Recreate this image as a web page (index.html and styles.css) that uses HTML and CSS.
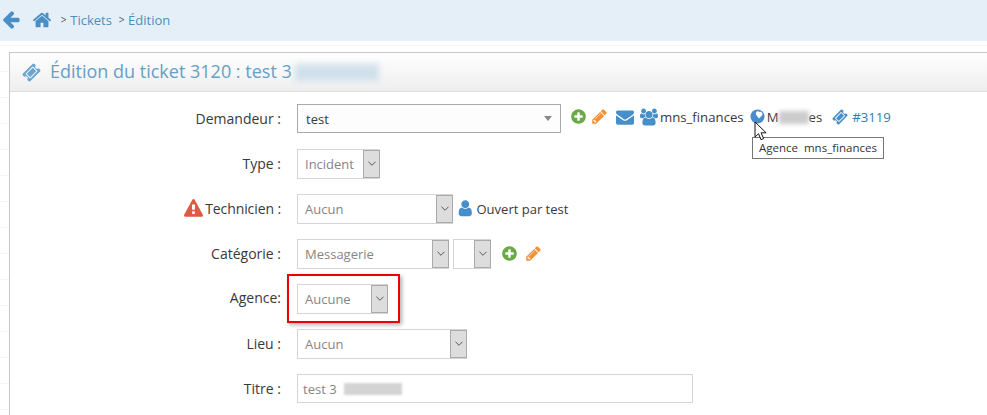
FILE: index.html
```html
<!DOCTYPE html>
<html lang="fr">
<head>
<meta charset="utf-8">
<title>Édition du ticket</title>
<link rel="stylesheet" href="styles.css">
</head>
<body>
<nav class="crumbs">
  <svg class="ico back" viewBox="0 0 1792 1792"><path d="M1664 832v128q0 53-32.500 90.500t-84.500 37.500h-704l293 294q38 36 38 90t-38 90l-75 76q-37 37-90 37-52 0-91-37l-651-652q-37-37-37-90 0-52 37-91l651-650q38-38 91-38 52 0 90 38l75 74q38 38 38 91t-38 91l-293 293h704q52 0 84.500 37.500t32.500 90.500z"/></svg>
  <svg class="ico home" viewBox="0 0 1792 1792"><path d="M1472 992v480q0 26-19 45t-45 19h-384v-384h-256v384h-384q-26 0-45-19t-19-45v-480q0-1 .5-3t.5-3l575-474 575 474q1 2 1 6zm223-69l-62 74q-8 9-21 11h-3q-13 0-21-7l-692-577-692 577q-12 8-24 7-13-2-21-11l-62-74q-8-10-7-23.500t11-21.500l719-599q32-26 76-26t76 26l244 204v-195q0-14 9-23t23-9h192q14 0 23 9t9 23v408l219 182q10 8 11 21.500t-7 23.500z"/></svg>
  <span class="sep">&gt;</span><a class="crumb">Tickets</a>
  <span class="sep">&gt;</span><a class="crumb">Édition</a>
</nav>
<main class="page">
  <section class="panel">
    <header class="panel-head">
      <svg class="ico ticket-big" viewBox="0 0 1792 1792"><path d="M1024 452l316 316-572 572-316-316zm-211 979l618-618q19-19 19-45t-19-45l-362-362q-18-18-45-18t-45 18l-618 618q-19 19-19 45t19 45l362 362q18 18 45 18t45-18zm889-637l-907 908q-37 37-90.500 37t-90.500-37l-126-126q56-56 56-136t-56-136-136-56-136 56l-125-126q-37-37-37-90.500t37-90.500l907-906q37-37 90.500-37t90.500 37l125 125q-56 56-56 136t56 136 136 56 136-56l126 125q37 37 37 90.500t-37 90.500z"/></svg>
      <h1 class="title">Édition du ticket 3120 : test 3</h1>
      <span class="blur-title"></span>
    </header>
    <form class="form">
      <div class="label">Demandeur :</div>
      <div class="field">
        <div class="combo"><span>test</span><i class="caret"></i></div>
        <div class="meta">
          <svg class="ico add first" viewBox="0 0 1792 1792"><path d="M1344 960v-128q0-26-19-45t-45-19h-256v-256q0-26-19-45t-45-19h-128q-26 0-45 19t-19 45v256h-256q-26 0-45 19t-19 45v128q0 26 19 45t45 19h256v256q0 26 19 45t45 19h128q26 0 45-19t19-45v-256h256q26 0 45-19t19-45zm320-64q0 209-103 385.500t-279.500 279.500-385.500 103-385.500-103-279.500-279.500-103-385.500 103-385.500 279.500-279.500 385.500-103 385.500 103 279.500 279.500 103 385.500z"/></svg>
          <svg class="ico edit" viewBox="0 0 1792 1792"><path d="M491 1536l91-91-235-235-91 91v107h128v128h107zm523-928q0-22-22-22-10 0-17 7l-542 542q-7 7-7 17 0 22 22 22 10 0 17-7l542-542q7-7 7-17zm-54-192l416 416-832 832h-416v-416zm683 96q0 53-37 90l-166 166-416-416 166-165q36-38 90-38 53 0 91 38l235 234q37 39 37 91z"/></svg>
          <svg class="ico mail" viewBox="0 0 1792 1792"><path d="M1792 710v794q0 66-47 113t-113 47h-1472q-66 0-113-47t-47-113v-794q44 49 101 87 362 246 497 345 57 42 92.500 65.500t94.500 48 110 24.500h2q51 0 110-24.500t94.500-48 92.500-65.500q170-123 498-345 57-39 100-87zm0-294q0 79-49 151t-122 123q-376 261-468 325-10 7-42.500 30.500t-54 38-52 32.500-57.500 27-50 9h-2q-23 0-50-9t-57.500-27-52-32.500-54-38-42.500-30.500q-91-64-262-182.500t-205-142.500q-62-42-117-115.500t-55-136.500q0-78 41.500-130t118.500-52h1472q65 0 112.500 47t47.500 113z"/></svg>
          <svg class="ico users" viewBox="0 0 1920 1792"><path d="M593 896q-162 5-265 128h-134q-82 0-138-40.500t-56-118.500q0-353 124-353 6 0 43.500 21t97.500 42.500 119 21.500q67 0 133-23-5 37-5 66 0 139 81 256zm1071 637q0 120-73 189.500t-194 69.500h-874q-121 0-194-69.500t-73-189.500q0-53 3.500-103.500t14-109 26.500-108.500 43-97.500 62-81 85.500-53.500 111.500-20q10 0 43 21.500t73 48 107 48 135 21.500 135-21.500 107-48 73-48 43-21.500q61 0 111.500 20t85.500 53.500 62 81 43 97.500 26.500 108.500 14 109 3.500 103.500zm-1024-1277q0 106-75 181t-181 75-181-75-75-181 75-181 181-75 181 75 75 181zm704 384q0 159-112.500 271.500t-271.500 112.500-271.500-112.500-112.500-271.500 112.500-271.500 271.500-112.500 271.500 112.500 112.500 271.500zm576 225q0 78-56 118.500t-138 40.500h-134q-103-123-265-128 81-117 81-256 0-29-5-66 66 23 133 23 59 0 119-21.500t97.500-42.500 43.500-21q124 0 124 353zm-128-609q0 106-75 181t-181 75-181-75-75-181 75-181 181-75 181 75 75 181z"/></svg>
          <span class="txt">mns_finances</span>
          <svg class="ico globe" viewBox="0 0 16 16"><circle cx="8" cy="8" r="7.500" fill="#4a8ccb"/><path fill="#fff" d="M7 3c1-.7 2.300-.6 3 .2.900-.5 2.300-.2 3 1 .6 1.200.1 2.500-.9 3.400L9.500 10 7.700 7.800C6.800 6.800 6 5.900 6.200 4.600c.1-.7.300-1.300.8-1.600z"/></svg>
          <span class="txt masked">M<span class="blur-inline"></span>es</span>
          <svg class="ico ticket-small" viewBox="0 0 1792 1792"><path d="M1024 452l316 316-572 572-316-316zm-211 979l618-618q19-19 19-45t-19-45l-362-362q-18-18-45-18t-45 18l-618 618q-19 19-19 45t19 45l362 362q18 18 45 18t45-18zm889-637l-907 908q-37 37-90.500 37t-90.500-37l-126-126q56-56 56-136t-56-136-136-56-136 56l-125-126q-37-37-37-90.500t37-90.500l907-906q37-37 90.500-37t90.500 37l125 125q-56 56-56 136t56 136 136 56 136-56l126 125q37 37 37 90.500t-37 90.500z"/></svg>
          <a class="ticket-link">#3119</a>
        </div>
      </div>

      <div class="label">Type :</div>
      <div class="field">
        <div class="select w-type"><span>Incident</span><b class="btn"><svg viewBox="0 0 9 5"><path d="M.5.500 4.500 4.500 8.500.500"/></svg></b></div>
      </div>

      <div class="label"><svg class="ico warn" viewBox="0 0 1792 1792"><path d="M1024 1375v-190q0-14-9.500-23.500t-22.500-9.500h-192q-13 0-22.500 9.500t-9.500 23.500v190q0 14 9.500 23.500t22.500 9.500h192q13 0 22.500-9.500t9.500-23.500zm-2-374l18-459q0-12-10-19-13-11-24-11h-220q-11 0-24 11-10 7-10 21l17 457q0 10 10 16.500t24 6.500h185q14 0 23.500-6.500t10.500-16.500zm-14-934l768 1408q35 63-2 126-17 29-46.500 46t-63.500 17h-1536q-34 0-63.500-17t-46.500-46q-37-63-2-126l768-1408q17-31 47-49t65-18 65 18 47 49z"/></svg><span class="tech">Technicien :</span></div>
      <div class="field">
        <div class="select w-tech"><span>Aucun</span><b class="btn"><svg viewBox="0 0 9 5"><path d="M.5.500 4.500 4.500 8.500.500"/></svg></b></div>
        <svg class="ico user" viewBox="0 0 1792 1792"><path d="M1536 1399q0 109-62.500 187t-150.500 78h-854q-88 0-150.500-78t-62.500-187q0-85 8.500-160.500t31.500-152 58.500-131 94-89 134.500-34.500q131 128 313 128t313-128q76 0 134.500 34.500t94 89 58.500 131 31.500 152 8.500 160.500zm-256-887q0 159-112.500 271.500t-271.500 112.500-271.500-112.500-112.500-271.500 112.500-271.500 271.500-112.500 271.500 112.500 112.500 271.500z"/></svg>
        <span class="txt">Ouvert par test</span>
      </div>

      <div class="label">Catégorie :</div>
      <div class="field">
        <div class="select w-cat"><span>Messagerie</span><b class="btn"><svg viewBox="0 0 9 5"><path d="M.5.500 4.500 4.500 8.500.500"/></svg></b></div>
        <div class="select w-sub"><b class="btn"><svg viewBox="0 0 9 5"><path d="M.5.500 4.500 4.500 8.500.500"/></svg></b></div>
        <svg class="ico add second" viewBox="0 0 1792 1792"><path d="M1344 960v-128q0-26-19-45t-45-19h-256v-256q0-26-19-45t-45-19h-128q-26 0-45 19t-19 45v256h-256q-26 0-45 19t-19 45v128q0 26 19 45t45 19h256v256q0 26 19 45t45 19h128q26 0 45-19t19-45v-256h256q26 0 45-19t19-45zm320-64q0 209-103 385.500t-279.500 279.500-385.500 103-385.500-103-279.500-279.500-103-385.500 103-385.500 279.500-279.500 385.500-103 385.500 103 279.500 279.500 103 385.500z"/></svg>
        <svg class="ico edit" viewBox="0 0 1792 1792"><path d="M491 1536l91-91-235-235-91 91v107h128v128h107zm523-928q0-22-22-22-10 0-17 7l-542 542q-7 7-7 17 0 22 22 22 10 0 17-7l542-542q7-7 7-17zm-54-192l416 416-832 832h-416v-416zm683 96q0 53-37 90l-166 166-416-416 166-165q36-38 90-38 53 0 91 38l235 234q37 39 37 91z"/></svg>
      </div>

      <div class="label label-agence">Agence:</div>
      <div class="field">
        <div class="select w-agence highlighted"><span>Aucune</span><b class="btn"><svg viewBox="0 0 9 5"><path d="M.5.500 4.500 4.500 8.500.500"/></svg></b></div>
      </div>

      <div class="label">Lieu :</div>
      <div class="field">
        <div class="select w-lieu"><span>Aucun</span><b class="btn"><svg viewBox="0 0 9 5"><path d="M.5.500 4.500 4.500 8.500.500"/></svg></b></div>
      </div>

      <div class="label">Titre :</div>
      <div class="field">
        <div class="input"><span>test 3</span><span class="blur-input"></span></div>
      </div>
    </form>
  </section>
</main>
<div class="tooltip">Agence&nbsp; mns_finances</div>
<svg class="cursor" viewBox="0 0 13 20"><path d="M1 1v15l3.500-3.300 2.500 6 2.600-1.100-2.500-5.800h5z" fill="#fff" stroke="#111" stroke-width="1"/></svg>
</body>
</html>
```

FILE: styles.css
```css
* { box-sizing: border-box; }
html, body { margin: 0; height: 415px; overflow: hidden; background: #fff; }
body { font-family: "Open Sans", sans-serif; font-size: 13px; color: #393939; }
svg.ico { fill: currentColor; display: block; flex: none; }

.crumbs { height: 41px; background: #e4eff7; display: flex; align-items: center; padding: 0 0 2px 1px; color: #4a8fc4; }
.back { width: 20px; height: 20px; color: #4a8ec6; margin-right: 11px; }
.home { width: 20px; height: 20px; color: #4a8ec6; margin-right: 7px; }
.sep { color: #666; font-family: "DejaVu Sans", sans-serif; font-size: 11px; margin-right: 2px; transform: scaleX(.7); }
.crumb { color: #4c8fbd; margin-right: 5px; }

.page { height: 374px; padding: 11px 0 0 9px; background: repeating-linear-gradient(to bottom, transparent 0, transparent 4px, #f1f5f9 4px, #f1f5f9 5px, transparent 5px, transparent 26px); }
.panel { background: #fff; border-left: 1px solid #c6c6c6; border-top: 1px solid #c6c6c6; height: 363px; }
.panel-head { height: 39px; border-bottom: 1px solid #ddd; background: linear-gradient(#fff, #eee); display: flex; align-items: center; padding-left: 12px; color: #669fc7; }
.ticket-big { width: 19px; height: 19px; margin-right: 9px; color: #6aa5d0; }
.title { margin: -2px 0 0; font-size: 18px; font-weight: 400; color: #669fc7; line-height: 1; }
.blur-title { width: 84px; height: 17px; margin-left: 3px; background: #d0e0eb; filter: blur(3px); }

.form { display: grid; grid-template-columns: 272px 1fr; grid-auto-rows: 45px; padding-top: 4px; }
.label { display: flex; justify-content: flex-end; align-items: center; font-size: 14px; padding-right: 1px; }
.label-agence { padding-bottom: 3px; }
.tech { letter-spacing: -.1px; }
.field { display: flex; align-items: center; padding-left: 15px; }

.combo { width: 264px; height: 29px; border: 1px solid #aaa; display: flex; align-items: center; justify-content: space-between; padding: 0 8px; background: #fdfdfd; }
.caret { width: 0; height: 0; border: 4.500px solid transparent; border-top: 5px solid #888; border-bottom: 0; }
.meta { display: flex; align-items: center; margin-bottom: 4px; font-size: 13.200px; }
.first { margin-left: 9px; }
.add { width: 17px; height: 17px; color: #69aa46; }
.edit { width: 17px; height: 17px; margin-left: 4px; color: #f78f33; }
.mail { width: 18px; height: 18px; color: #478fca; margin-left: 8px; }
.users { width: 18px; height: 18px; color: #478fca; margin-left: 6px; }
.txt { margin-left: 2px; color: #393939; }
.globe { width: 15px; height: 15px; margin-left: 6px; }
.masked { display: inline-flex; margin-left: 2px; }
.blur-inline { width: 30px; height: 13px; margin-top: 3px; background: #ccc; filter: blur(2px); }
.ticket-small { width: 16px; height: 16px; margin-left: 10px; color: #478fca; }
.ticket-link { margin-left: 4px; color: #337ab7; }

.select { height: 30px; border: 1px solid #d5d5d5; display: flex; align-items: center; justify-content: space-between; padding-left: 7px; color: #858585; background: #fff; position: relative; }
.btn { width: 17px; height: 100%; background: #ddd; border: 1px solid #aaa; margin-right: -1px; display: flex; align-items: center; justify-content: center; }
.btn svg { width: 8px; height: 5px; fill: none; stroke: #444; stroke-width: 1; }
.w-type { width: 83px; }
.w-tech { width: 156px; }
.w-cat { width: 152px; }
.w-sub { width: 38px; margin-left: 4px; justify-content: flex-end; }
.w-agence { width: 91px; }
.w-lieu { width: 170px; }
.second { margin-left: 10px; margin-right: 3px; }
.user { width: 18.500px; height: 18.500px; color: #478fca; margin-left: 3px; }
.warn { width: 19px; height: 19px; color: #dd5a43; margin-right: 2px; }

.input { width: 396px; height: 29px; border: 1px solid #d5d5d5; display: flex; align-items: center; padding-left: 5px; color: #858585; font-size: 13px; }
.blur-input { width: 58px; height: 12px; margin-left: 7px; background: #d4d4d4; filter: blur(1px); }

.highlighted::after { content: ""; position: absolute; left: -11px; right: -13px; top: -11px; bottom: -10px; border: 2px solid #ee0000; box-shadow: 2px 2px 4px rgba(0,0,0,.3); pointer-events: none; }

.tooltip { position: absolute; left: 752px; top: 137px; width: 132px; height: 22px; border: 1px solid #767676; background: #fff; color: #333; font-size: 11.500px; line-height: 20px; padding-left: 6px; white-space: nowrap; }
.cursor { position: absolute; left: 754px; top: 121px; width: 13px; height: 20px; }
```
